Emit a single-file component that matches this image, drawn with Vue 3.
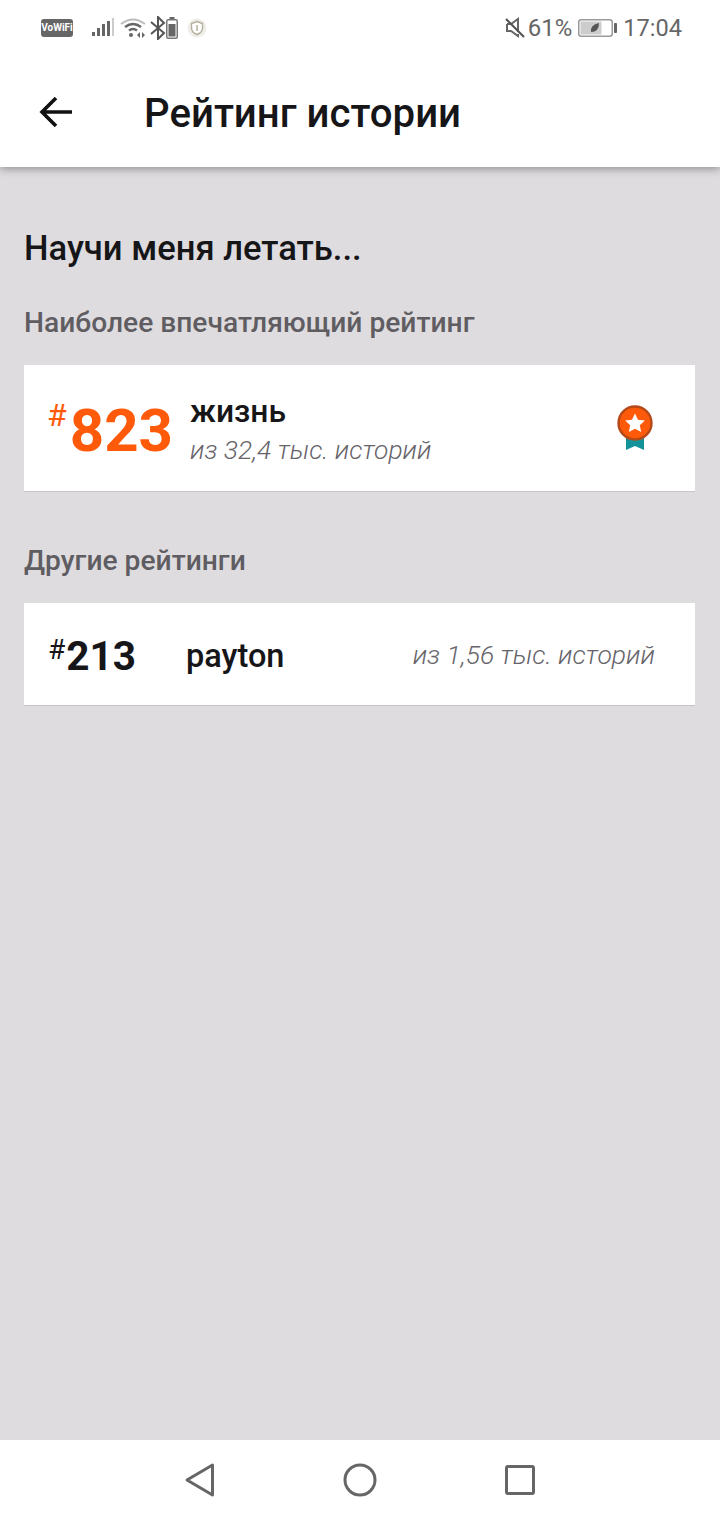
<template>
  <div class="screen">
    <header class="top">
      <div class="status-bar">
        <div class="status-left">
          <span class="vowifi">VoWiFi</span>
          <svg class="sig" width="24" height="20" viewBox="0 0 24 20">
            <rect x="1" y="14" width="3" height="4" fill="#666" />
            <rect x="6" y="10" width="3" height="8" fill="#666" />
            <rect x="11" y="6" width="3" height="12" fill="#666" />
            <rect x="16" y="3" width="3" height="15" fill="#666" />
            <rect x="21" y="0" width="2" height="18" fill="#ccc" />
          </svg>
          <svg class="wifi" width="26" height="22" viewBox="0 0 26 22" fill="none">
            <path d="M1 7 Q13 -2 25 7" stroke="#bbb" stroke-width="2" />
            <path d="M5 10 Q13 4 21 10" stroke="#666" stroke-width="2.4" />
            <path d="M9 13.5 Q13 10.5 17 13.5" stroke="#666" stroke-width="2.4" />
            <circle cx="11" cy="18" r="2" fill="#666" />
            <path d="M17 18l3-3v6zM25 18l-3-3v6z" fill="#666" />
          </svg>
          <svg class="bt" width="16" height="24" viewBox="0 0 16 24" fill="none">
            <path d="M1 6l13 11-6 6V1l6 6L1 18" stroke="#555" stroke-width="2" />
          </svg>
          <svg class="batt-small" width="12" height="22" viewBox="0 0 12 22">
            <rect x="3.5" y="0" width="5" height="3" fill="#666" />
            <rect x="0.75" y="2.75" width="10.5" height="18.5" rx="1.5" fill="#fff" stroke="#777" stroke-width="1.5" />
            <rect x="2.5" y="7" width="7" height="12.5" fill="#666" />
          </svg>
          <svg class="shield" width="20" height="20" viewBox="0 0 20 20">
            <circle cx="10" cy="10" r="9.5" fill="#efeee9" />
            <path d="M10 3.5l5.500 2v4.500q0 4.500-5.500 6.500-5.500-2-5.500-6.500V5.500z" fill="#fff" stroke="#b5b09c" stroke-width="1.400" />
            <path d="M10 7v6" stroke="#c9c5b4" stroke-width="2" />
          </svg>
        </div>
        <div class="status-right">
          <svg width="20" height="22" viewBox="0 0 20 22" fill="none">
            <path d="M2 7h4l7-5v13M2 7v7h4l7 5v-2" stroke="#666" stroke-width="2" />
            <path d="M1 2l18 18" stroke="#555" stroke-width="2.2" />
          </svg>
          <span class="pct">61%</span>
          <svg width="39" height="18" viewBox="0 0 39 18">
            <rect x="0.75" y="0.75" width="33.5" height="16.5" rx="2.5" fill="#fff" stroke="#999" stroke-width="1.5" />
            <rect x="2.5" y="2.5" width="21" height="13" fill="#ccc" />
            <path d="M13 13q-1-7 8-9 0 9-8 9z" fill="#555" />
            <rect x="36" y="4" width="3" height="10" rx="1" fill="#666" />
          </svg>
          <span class="time">17:04</span>
        </div>
      </div>

      <div class="toolbar">
        <svg class="back" width="34" height="34" viewBox="0 0 34 34" fill="none">
          <path d="M33 17H3.500M17 3L3 17l14 14" stroke="#111" stroke-width="3.6" />
        </svg>
        <h1>Рейтинг истории</h1>
      </div>
    </header>

    <main class="content">
      <h2>Научи меня летать...</h2>

      <h3 class="first">Наиболее впечатляющий рейтинг</h3>
      <section class="card card-top">
        <div class="rank rank-top"><span class="hash">#</span><span class="num">823</span></div>
        <div class="info">
          <div class="tag">жизнь</div>
          <div class="count">из 32,4 тыс. историй</div>
        </div>
        <svg class="medal" width="38" height="46" viewBox="0 0 38 46">
          <path d="M10 28h18v17l-9-4-9 4z" fill="#14929a" />
          <circle cx="19" cy="18" r="16.500" fill="#ff5a0a" stroke="#b5491a" stroke-width="2.400" />
          <path d="M19 8.500l3 6.300 6.900.8-5.100 4.700 1.400 6.800-6.200-3.400-6.200 3.400 1.400-6.800-5.100-4.700 6.900-.8z" fill="#fff" />
        </svg>
      </section>

      <h3>Другие рейтинги</h3>
      <section class="card card-other">
        <div class="rank rank-other"><span class="hash">#</span><span class="num">213</span></div>
        <div class="tag other-tag">payton</div>
        <div class="count other-count">из 1,56 тыс. историй</div>
      </section>
    </main>

    <nav class="nav-bar">
      <svg width="32" height="36" viewBox="0 0 32 36" fill="none">
        <path d="M28.500 3L3 18l25.500 15z" stroke="#666" stroke-width="3" stroke-linejoin="round" />
      </svg>
      <svg width="34" height="34" viewBox="0 0 34 34" fill="none">
        <circle cx="17" cy="17" r="15" stroke="#666" stroke-width="3" />
      </svg>
      <svg width="30" height="30" viewBox="0 0 30 30" fill="none">
        <rect x="1.500" y="1.500" width="27" height="27" rx="1.500" stroke="#666" stroke-width="3" />
      </svg>
    </nav>
  </div>
</template>

<script setup>
</script>

<style>
body {
  margin: 0;
}
</style>

<style scoped>
.screen {
  width: 720px;
  height: 1520px;
  display: flex;
  flex-direction: column;
  background: #dedcdf;
  font-family: Roboto, "Noto Sans", sans-serif;
  overflow: hidden;
}

.top {
  background: #fff;
  box-shadow: 0 2px 8px rgba(0, 0, 0, 0.35);
}

.status-bar {
  height: 56px;
  display: flex;
  justify-content: space-between;
  align-items: center;
  padding: 0 38px 0 41px;
}

.status-left {
  display: flex;
  align-items: center;
}

.status-right {
  display: flex;
  align-items: center;
  color: #666;
  font-size: 24px;
}

.vowifi {
  width: 32px;
  height: 18px;
  background: #666;
  border-radius: 3px;
  color: #fff;
  font-size: 10px;
  font-weight: 700;
  line-height: 18px;
  text-align: center;
}

.sig {
  margin-left: 18px;
}

.wifi {
  margin-left: 5px;
}

.bt {
  margin-left: 4px;
}

.shield {
  margin-left: 9px;
}

.pct {
  margin-left: 3px;
  margin-right: 6px;
}

.time {
  margin-left: 6px;
  font-size: 23.6px;
}

.toolbar {
  height: 111px;
  display: flex;
  align-items: center;
  padding-left: 39px;
}

.back {
  margin-right: 71px;
}

h1 {
  margin: 4px 0 0;
  font-size: 40.2px;
  font-weight: 500;
  color: #161518;
}

.content {
  flex: 1;
  padding: 0 24px;
}

h2 {
  margin: 59px 0 0;
  font-size: 34.6px;
  line-height: 44px;
  font-weight: 500;
  color: #161518;
}

h3 {
  margin: 51px 0 24px;
  font-size: 28.2px;
  line-height: 36px;
  font-weight: 500;
  color: #5f5d62;
}

h3.first {
  margin-top: 35px;
}

.card {
  background: #fff;
  display: flex;
  align-items: center;
  border-bottom: 1px solid #c6c4c9;
  width: 671px;
  box-sizing: border-box;
}

.card-top {
  height: 127px;
}

.card-other {
  height: 103px;
}

.rank {
  display: flex;
  align-items: flex-start;
  margin-left: 23px;
}

.rank .hash {
  font-size: 32px;
  font-weight: 400;
}

.rank-top {
  color: #ff5a0a;
  width: 143px;
}

.rank-top .num {
  font-size: 60px;
  font-weight: 700;
  line-height: 60px;
  margin-top: 6px;
  margin-left: 3px;
}

.rank-top .hash {
  line-height: 32px;
  margin-top: 4px;
}

.rank-other {
  color: #161518;
  width: 139px;
}

.rank-other .num {
  font-size: 40.5px;
  font-weight: 700;
  line-height: 48px;
  margin-top: 3px;
  margin-left: 1px;
}

.rank-other .hash {
  font-size: 28px;
  line-height: 28px;
  margin-top: 7px;
  margin-left: 1px;
}

.info {
  flex: 1;
  margin-top: 4px;
}

.tag {
  font-size: 31.8px;
  font-weight: 500;
  color: #161518;
  line-height: 38px;
}

.count {
  font-size: 26.4px;
  font-style: italic;
  font-weight: 300;
  color: #66646a;
  line-height: 36px;
  margin-top: 2px;
}

.medal {
  margin-right: 41px;
}

.other-tag {
  flex: 1;
  font-size: 32.5px;
  margin-top: 4px;
}

.other-count {
  margin-right: 40px;
  font-size: 26.5px;
  margin-top: 2px;
}

.nav-bar {
  height: 80px;
  background: #fff;
  display: flex;
  align-items: center;
}

.nav-bar svg:nth-child(1) {
  margin-left: 184px;
}

.nav-bar svg:nth-child(2) {
  margin-left: 127px;
}

.nav-bar svg:nth-child(3) {
  margin-left: 128px;
}
</style>
